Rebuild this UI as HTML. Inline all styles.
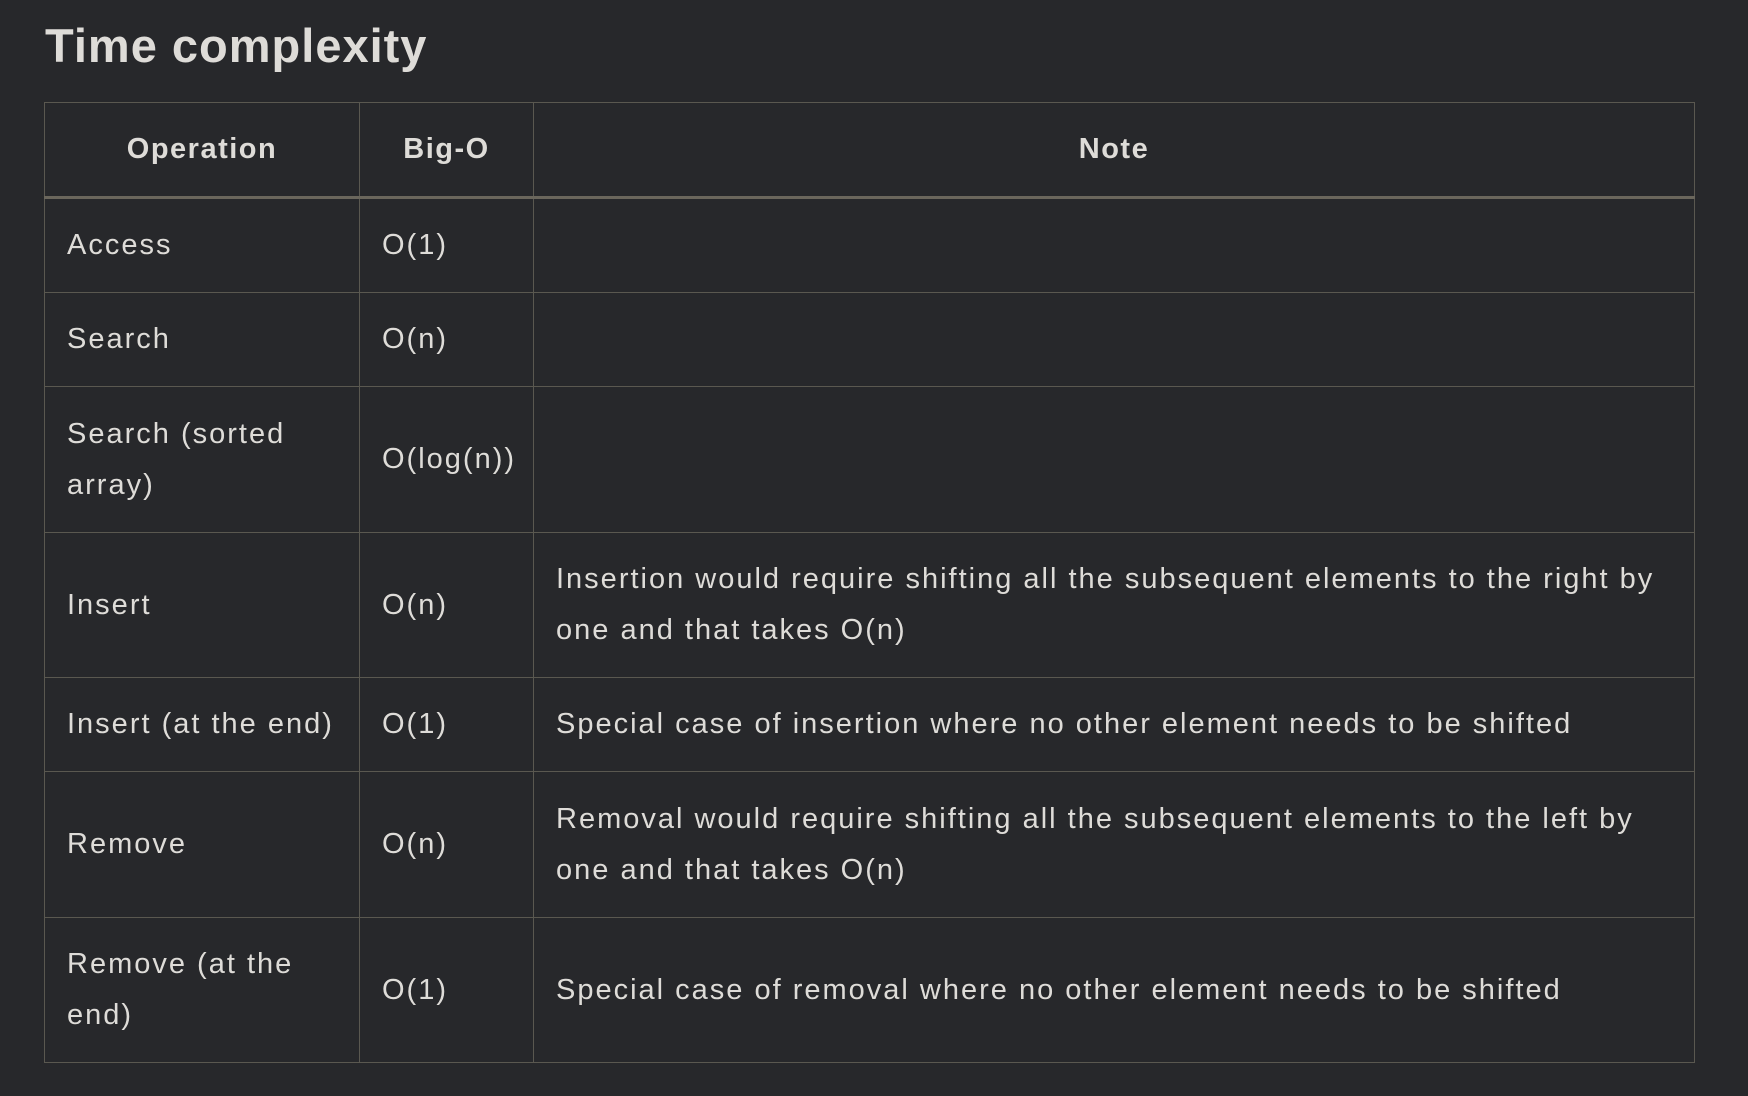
<!DOCTYPE html>
<html><head><style>
body{margin:0;background:#27282b;width:1748px;height:1096px;overflow:hidden;font-family:"Liberation Sans",sans-serif;color:#dedcd8;}
h2{position:absolute;left:45px;top:18px;margin:0;font-size:47px;font-weight:bold;letter-spacing:1px;}
table{position:absolute;left:44px;top:102px;width:1651px;border-collapse:collapse;font-size:29px;letter-spacing:2px;table-layout:fixed;}
td,th{border:1.5px solid #5a5850;padding:0 22px;line-height:51px;text-align:left;vertical-align:middle;}
td:first-child{padding-right:10px;}
th{text-align:center;font-weight:bold;height:93px;border-bottom:3px solid #6a665c;letter-spacing:1.5px;}
</style></head><body>
<h2>Time complexity</h2>
<table>
<colgroup><col style="width:315px"><col style="width:174px"><col></colgroup>
<tr><th>Operation</th><th>Big-O</th><th>Note</th></tr>
<tr style="height:95px"><td>Access</td><td>O(1)</td><td></td></tr>
<tr style="height:94px"><td>Search</td><td>O(n)</td><td></td></tr>
<tr style="height:146px"><td>Search (sorted array)</td><td>O(log(n))</td><td></td></tr>
<tr style="height:145px"><td>Insert</td><td>O(n)</td><td>Insertion would require shifting all the subsequent elements to the right by one and that takes O(n)</td></tr>
<tr style="height:94px"><td>Insert (at the end)</td><td>O(1)</td><td>Special case of insertion where no other element needs to be shifted</td></tr>
<tr style="height:146px"><td>Remove</td><td>O(n)</td><td>Removal would require shifting all the subsequent elements to the left by one and that takes O(n)</td></tr>
<tr style="height:145px"><td>Remove (at the end)</td><td>O(1)</td><td>Special case of removal where no other element needs to be shifted</td></tr>
</table>
</body></html>
